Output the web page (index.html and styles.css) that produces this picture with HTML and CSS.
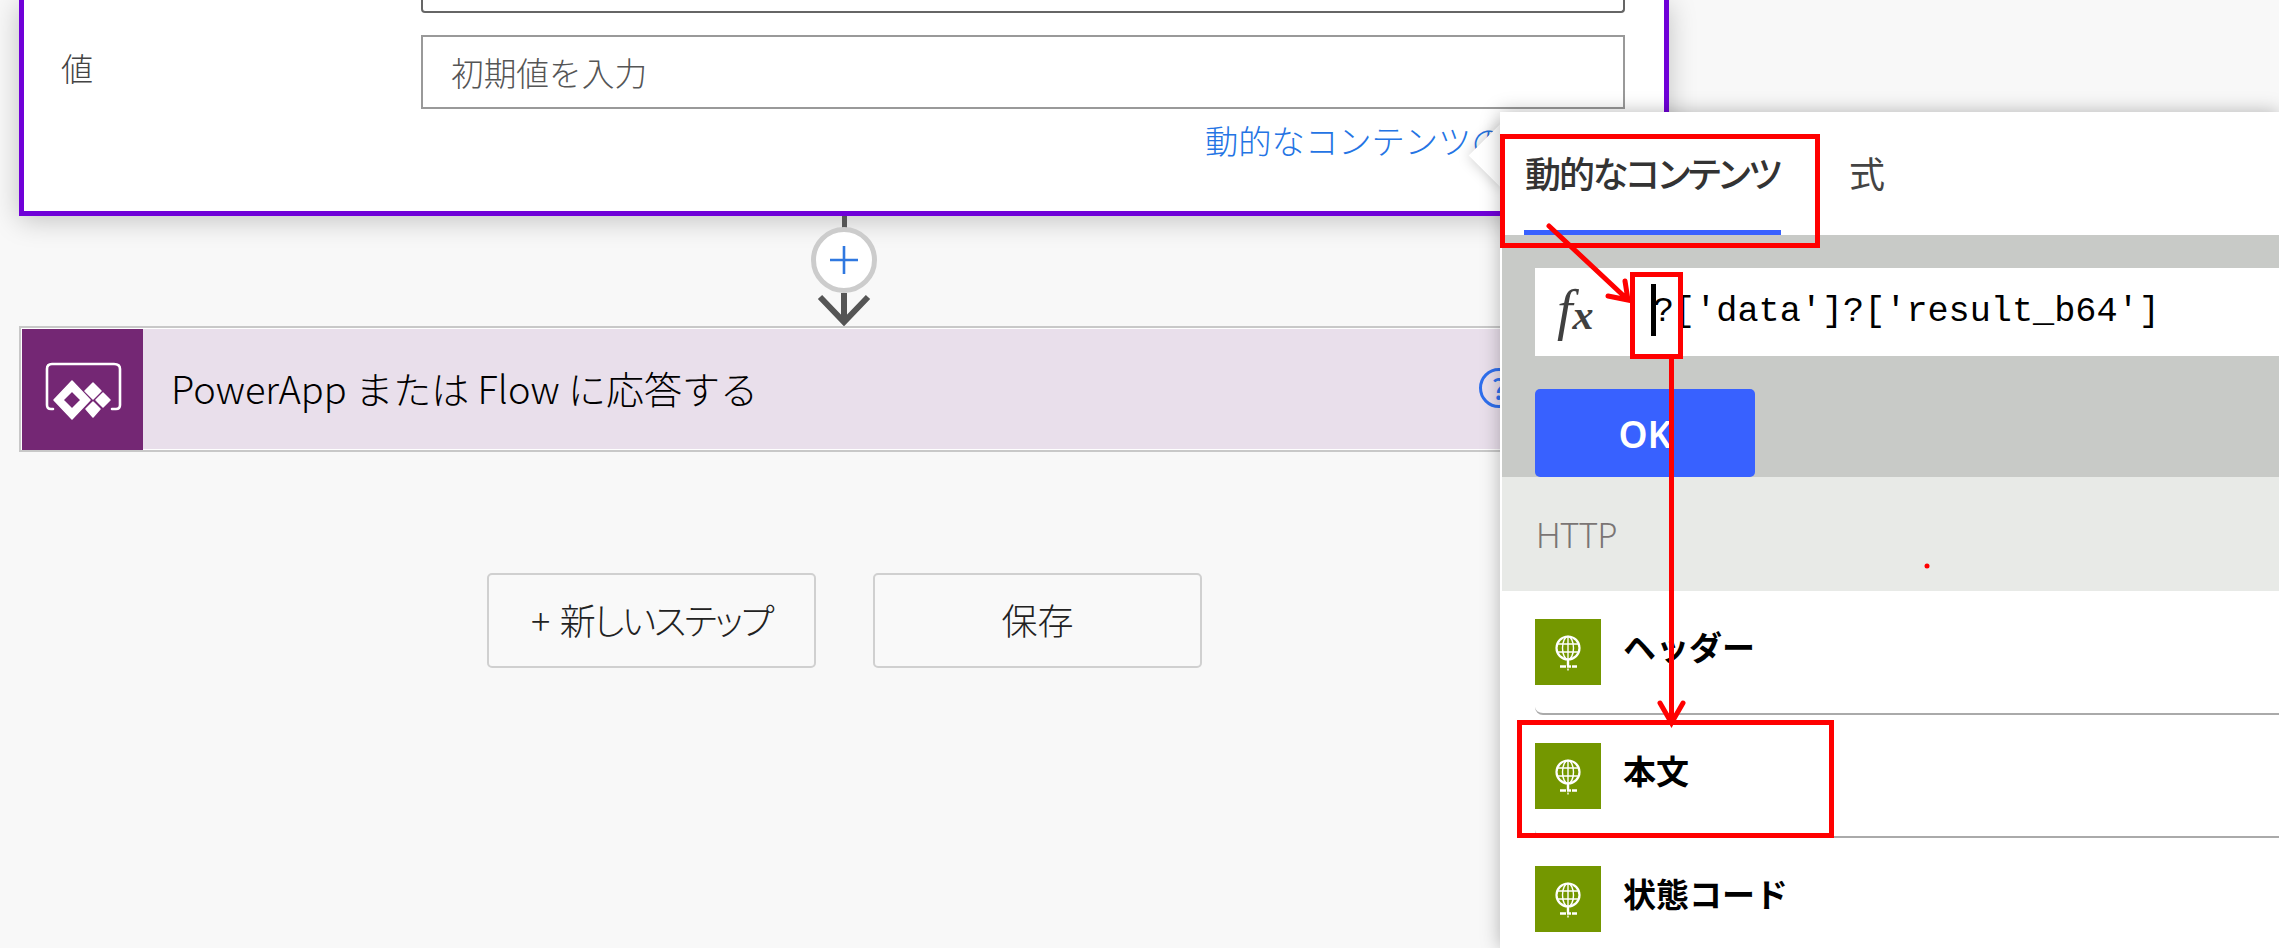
FILE: index.html
```html
<!DOCTYPE html>
<html lang="ja">
<head>
<meta charset="utf-8">
<title>Flow</title>
<link rel="stylesheet" href="styles.css">
</head>
<body>
<div class="page">
  <main class="canvas">
    <section class="card">
      <div class="cut-input"></div>
      <div class="field">
        <label class="field-label">値</label>
        <div class="field-input">初期値を入力</div>
      </div>
      <div class="link-row"><a class="link">動的なコンテンツの追加</a></div>
    </section>
    <div class="connector">
      <span class="stem-top"></span>
      <span class="add">
        <svg width="30" height="30" viewBox="0 0 30 30"><path d="M15 1v28M1 15h28" stroke="#2f78e0" stroke-width="2.6" fill="none"/></svg>
      </span>
      <svg class="stem-arrow" width="56" height="33" viewBox="0 0 56 33"><path d="M28 0v29M4 4l24 25L52 4" stroke="#555" stroke-width="6" fill="none"/></svg>
    </div>
    <section class="step">
      <span class="step-icon">
        <svg width="121" height="121" viewBox="22 329 121 121">
          <path d="M53 409h-2q-4 0-4-4v-36q0-5 5-5h62q6 0 6 5v36q0 4-4 4h-4" fill="none" stroke="#fff" stroke-width="2.6" stroke-linecap="round"/>
          <path fill-rule="evenodd" fill="#fff" d="M72 381l18 19-18 19-18-19zM72 391l-9 9 9 9 9-9z" stroke="#fff" stroke-width="1.5" stroke-linejoin="round"/>
          <path fill="#fff" stroke="#fff" stroke-width="1.5" stroke-linejoin="round" d="M93 383l8 8-8 8-8-8zM103 393l7 7-7 7-7-7zM93 402l7 7-7 8-7-8z"/>
        </svg>
      </span>
      <span class="step-title">PowerApp または Flow に応答する</span>
      <span class="help">?</span>
    </section>
    <div class="actions">
      <button class="action action-narrow">+&nbsp;&nbsp;新しいステップ</button>
      <button class="action">保存</button>
    </div>
  </main>

  <aside class="popup">
    <span class="beak"></span>
    <div class="popup-body">
      <div class="tabs">
        <span class="tab tab-on">動的なコンテンツ</span>
        <span class="tab">式</span>
      </div>
      <div class="formula">
        <div class="formula-input">
          <span class="fx">f<span class="fx-x">x</span></span>
          <span class="code"><span class="caret"></span>?['data']?['result_b64']</span>
        </div>
        <button class="ok">OK</button>
      </div>
      <div class="group">HTTP</div>
      <div class="row">
        <span class="row-icon"><svg class="globe" width="66" height="66" viewBox="0 0 66 66"><use href="#globe"/></svg></span>
        <span class="row-name">ヘッダー</span>
      </div>
      <div class="row">
        <span class="row-icon"><svg class="globe" width="66" height="66" viewBox="0 0 66 66"><use href="#globe"/></svg></span>
        <span class="row-name">本文</span>
      </div>
      <div class="row">
        <span class="row-icon"><svg class="globe" width="66" height="66" viewBox="0 0 66 66"><use href="#globe"/></svg></span>
        <span class="row-name">状態コード</span>
      </div>
    </div>
  </aside>

  <svg class="marks" width="2279" height="948" viewBox="0 0 2279 948">
    <defs>
      <g id="globe" fill="none" stroke="#fff">
        <circle cx="33" cy="29" r="11.5" stroke-width="2.2"/>
        <ellipse cx="33" cy="29" rx="5.5" ry="11.5" stroke-width="1.4"/>
        <path d="M33 17.5v23M22 25h22M22 33h22" stroke-width="1.4"/>
        <path d="M33 41v6" stroke-width="2.4"/>
        <path d="M25 47.500h6M32 47.500h4M37 47.500h5" stroke-width="2.6"/>
        <path d="M33 49.500v2" stroke-width="1.4"/>
      </g>
    </defs>
    <g fill="none" stroke="#f00" stroke-width="5">
      <rect x="1502.500" y="136.500" width="315" height="109"/>
      <rect x="1632.500" y="274.500" width="48" height="82"/>
      <rect x="1519.500" y="722.500" width="312" height="113"/>
      <path d="M1549 226l78 73M1608 296l20 4-3-19" stroke-linecap="round"/>
      <path d="M1671.500 357v366M1660 703l11.500 20 11.500-20" stroke-linecap="round"/>
    </g>
    <circle cx="1927" cy="566" r="2.500" fill="#f00"/>
  </svg>
</div>
</body>
</html>
```
FILE: styles.css
```css
* { box-sizing: border-box; }
html, body { margin: 0; padding: 0; }
body {
  font-family: "Noto Sans CJK JP", "Noto Sans", sans-serif;
  background: #f8f8f8;
  overflow: hidden;
}
.page { position: relative; width: 2279px; height: 948px; overflow: hidden; }
.canvas { display: flex; flex-direction: column; padding-left: 19px; width: 1669px; }

.card {
  height: 216px;
  background: #fff;
  border: 5px solid #6f00d8;
  border-top: 0;
  box-shadow: 0 4px 26px rgba(0, 0, 0, .22);
  padding-left: 397px;
  padding-right: 39px;
  position: relative;
}
.cut-input {
  height: 13px;
  border: 2px solid #666;
  border-top: 0;
  border-radius: 0 0 4px 4px;
  margin-bottom: 22px;
}
.field { display: flex; }
.field-label {
  position: absolute;
  left: 37px;
  top: 44px;
  font-size: 32px;
  line-height: 46px;
  font-weight: 300;
  color: #444;
}
.field-input {
  flex: 1;
  height: 74px;
  border: 2px solid #999;
  padding-left: 28px;
  font-size: 32.7px;
  line-height: 70px;
  font-weight: 300;
  color: #555;
}
.link-row { display: flex; justify-content: flex-end; height: 60px; margin-top: 9px; white-space: nowrap; }
.link { font-size: 33.300px; line-height: 44px; font-weight: 300; color: #2474e4; margin-right: -220px; width: 640px; }

.connector { position: relative; height: 110px; width: 100%; }
.stem-top { position: absolute; left: 823px; top: 0; width: 5px; height: 12px; background: #555; }
.add {
  position: absolute;
  left: 792px; top: 11px;
  width: 66px; height: 66px;
  border: 5px solid #ccc;
  border-radius: 50%;
  background: #fff;
  display: flex; align-items: center; justify-content: center;
}
.stem-arrow { position: absolute; left: 797px; top: 77px; }

.step {
  height: 126px;
  display: flex;
  align-items: center;
  border: 2px solid #c8c8c8;
  background: #e9dfeb;
  box-shadow: inset 0 0 0 1px #fff;
  padding: 1px;
  position: relative;
}
.step-icon { width: 121px; height: 121px; background: #742774; flex: none; }
.step-icon svg { display: block; }
.step-title {
  margin-left: 28px;
  font-size: 38px;
  font-weight: 300;
  color: #000;
  letter-spacing: 0;
  white-space: nowrap;
  margin-top: -4px;
}
.help {
  position: absolute;
  left: 1458px; top: 40px;
  width: 40px; height: 40px;
  border: 3px solid #2f6fed;
  border-radius: 50%;
  color: #2f6fed;
  font-size: 28px;
  line-height: 34px;
  text-align: center;
  font-weight: 500;
}

.actions { display: flex; gap: 57px; margin-top: 121px; margin-left: 468px; }
.action {
  width: 329px; height: 95px;
  background: #f9f9f9;
  border: 2px solid #d0d0d0;
  border-radius: 5px;
  font-family: inherit;
  font-size: 36px;
  font-weight: 300;
  color: #222;
  font-feature-settings: "palt";
  padding: 0 0 4px;
}
.action-narrow { letter-spacing: -2.1px; }

.popup { position: absolute; left: 1500px; top: 112px; right: 0; height: 836px; }
.beak {
  position: absolute;
  left: -22px; top: 21px;
  width: 45px; height: 45px;
  background: #fff;
  transform: rotate(45deg);
  box-shadow: 0 0 14px rgba(0, 0, 0, .22);
}
.popup-body {
  position: relative;
  height: 100%;
  background: #fff;
  box-shadow: 0 0 18px rgba(0, 0, 0, .28);
}
.tabs { display: flex; height: 123px; padding-left: 25px; gap: 68px; background: #fff; }
.tab {
  font-size: 36px;
  color: #444;
  font-weight: 400;
  height: 123px;
  line-height: 120px;
  font-feature-settings: "palt";
  white-space: nowrap;
  letter-spacing: -2.1px;
}
.tab-on { width: 257px; color: #333; font-weight: 500; border-bottom: 5px solid #3861ff; margin-left: -1px; text-indent: 1px; }
.formula { margin-left: 2px; background: #c8cac7; height: 242px; padding: 33px 0 0 33px; }
.formula-input {
  height: 88px;
  background: #fff;
  display: flex;
  align-items: center;
}
.fx {
  font-family: "Liberation Serif", serif;
  font-style: italic;
  font-weight: 400;
  font-size: 56px;
  color: #404040;
  margin-left: 22px;
  width: 96px;
  margin-top: -4px;
}
.fx-x { font-size: 42px; font-weight: 700; }
.code {
  position: relative;
  font-family: "Liberation Mono", monospace;
  font-size: 35.200px;
  color: #000;
  white-space: pre;
}
.caret { position: absolute; left: -2px; top: -8px; width: 5px; height: 52px; background: #000; }
.ok {
  display: block;
  margin-top: 33px;
  width: 220px; height: 88px;
  border: 0;
  border-radius: 5px;
  background: #3861ff;
  color: #fff;
  font-family: "Noto Sans", sans-serif;
  font-size: 37px;
  font-weight: 600;
  padding: 0;
}
.group {
  margin-left: 2px;
  height: 114px;
  background: #e8eae7;
  color: #7a7574;
  font-family: "Noto Sans", sans-serif;
  font-size: 34px;
  font-weight: 300;
  line-height: 116px;
  padding-left: 34px;
}
.row {
  display: flex;
  margin-left: 35px;
  height: 123.500px;
  padding-top: 28px;
  border-bottom: 2px solid #aaa;
  border-bottom-left-radius: 8px;
  gap: 22px;
}
.row-icon { width: 66px; height: 66px; background: #749700; flex: none; }
.globe { display: block; }
.row-name { font-size: 33px; font-weight: 700; color: #000; line-height: 54px; }

.marks { position: absolute; left: 0; top: 0; pointer-events: none; }
```
